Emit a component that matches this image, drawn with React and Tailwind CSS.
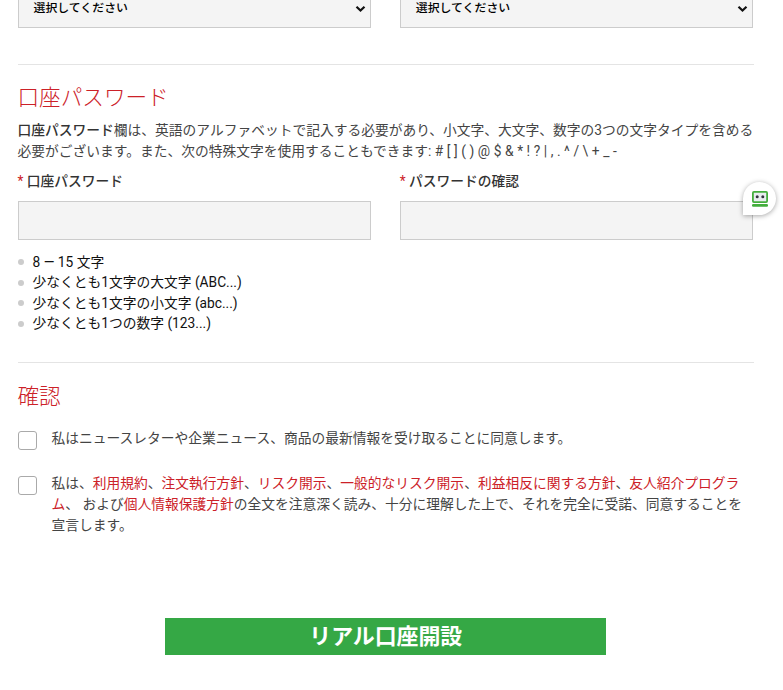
import React, { useState } from 'react';

const RULES = [
  '8 — 15 文字',
  '少なくとも1文字の大文字 (ABC...)',
  '少なくとも1文字の小文字 (abc...)',
  '少なくとも1つの数字 (123...)',
];

const SelectBox = () => (
  <div className="flex h-[39px] flex-1 items-center justify-between border border-[#ccc] bg-[#f4f4f4] pl-[15px] pr-1 text-[11.9px] font-medium text-black">
    <span>選択してください</span>
    <svg width="11" height="8" viewBox="0 0 11 8" fill="none">
      <path d="M1.5 1.8 5.5 5.6 9.5 1.8" stroke="#111" strokeWidth="2.2" />
    </svg>
  </div>
);

const PasswordField = ({ label }) => (
  <label className="flex-1">
    <span className="block h-[21px] font-medium text-[#333]">
      <span className="font-normal text-[#cc2128]">*</span> {label}
    </span>
    <input type="password" className="mt-[9px] block h-[39px] w-full border border-[#ccc] bg-[#f4f4f4] px-3 outline-none" />
  </label>
);

const Consent = ({ children, className }) => {
  const [checked, setChecked] = useState(false);

  return (
    <label className={`flex gap-[15px] ${className}`}>
      <input
        type="checkbox"
        checked={checked}
        onChange={(e) => setChecked(e.target.checked)}
        className="mt-[3px] size-[19px] shrink-0 appearance-none rounded-[3px] border border-[#aaa] bg-white checked:bg-[#35a845]"
      />
      <span className="whitespace-nowrap">{children}</span>
    </label>
  );
};

const Link = ({ children }) => (
  <a href="#" className="text-[#cc2128]">{children}</a>
);

// Password manager bubble over the confirm field
const PasswordManagerBadge = () => (
  <div className="absolute left-[743px] top-[182px] flex size-[33px] items-center justify-center rounded-full rounded-bl-[3px] bg-white shadow-[0_1px_5px_rgba(0,0,0,0.35)]">
    <svg width="16" height="16" viewBox="0 0 16 16">
      <rect x="0.9" y="0.9" width="14.2" height="10.2" rx="1" fill="#e8ecef" stroke="#43ae3d" strokeWidth="1.8" />
      <circle cx="5.2" cy="5.8" r="1.5" fill="#30343d" />
      <circle cx="10.8" cy="5.8" r="1.5" fill="#30343d" />
      <rect x="0" y="13" width="16" height="2.8" rx="1.2" fill="#43ae3d" />
    </svg>
  </div>
);

const App = () => {
  return (
    <div className="relative h-[690px] w-[783px] overflow-hidden bg-white pl-[17.5px] pr-[29px] font-[Roboto,'Noto_Sans_CJK_JP',sans-serif] text-[13.75px] leading-[20.6px] text-[#444]">
      <div className="-mt-[11px] flex gap-[29px] pr-px">
        <SelectBox />
        <SelectBox />
      </div>

      <section className="mt-9 border-t border-[#e4e4e4] pt-[19px]">
        <h2 className="h-[28px] text-[21.6px] font-light leading-[28px] text-[#cc2128]">口座パスワード</h2>
        <p className="mt-[8px] whitespace-nowrap">
          <strong className="font-medium text-[#333]">口座パスワード</strong>
          欄は、英語のアルファベットで記入する必要があり、小文字、大文字、数字の3つの文字タイプを含める
          <br />
          必要がございます。また、次の特殊文字を使用することもできます:{' '}
          <span className="tracking-[0.07px]"># [ ] ( ) @ $ & * ! ? | , . ^ / \ + _ -</span>
        </p>

        <div className="mt-[10px] flex gap-[29px] pr-px">
          <PasswordField label="口座パスワード" />
          <PasswordField label="パスワードの確認" />
        </div>

        <ul className="mt-[11.5px] text-[#111]">
          {RULES.map((rule) => (
            <li key={rule} className="flex items-center gap-[9px]">
              <span className="size-1.5 rounded-full bg-[#ccc]" />
              {rule}
            </li>
          ))}
        </ul>
      </section>

      <section className="mt-7 border-t border-[#e4e4e4] pt-5">
        <h2 className="h-[28px] text-[21.6px] font-light leading-[28px] text-[#cc2128]">確認</h2>
        <Consent className="mt-[17px]">
          私はニュースレターや企業ニュース、商品の最新情報を受け取ることに同意します。
        </Consent>
        <Consent className="mt-[23.4px]">
          私は、<Link>利用規約</Link>、<Link>注文執行方針</Link>、<Link>リスク開示</Link>、<Link>一般的なリスク開示</Link>、<Link>利益相反に関する方針</Link>、<Link>友人紹介プログラ</Link>
          <br />
          <Link>ム</Link>、 および<Link>個人情報保護方針</Link>の全文を注意深く読み、十分に理解した上で、それを完全に受諾、同意することを
          <br />
          宣言します。
        </Consent>
      </section>

      <button
        type="button"
        className="mx-auto mt-[83px] block h-[37px] w-[441px] bg-[#35a845] text-[21.9px] font-bold leading-[37px] text-white"
      >
        リアル口座開設
      </button>

      <PasswordManagerBadge />
    </div>
  );
};

export default App;
